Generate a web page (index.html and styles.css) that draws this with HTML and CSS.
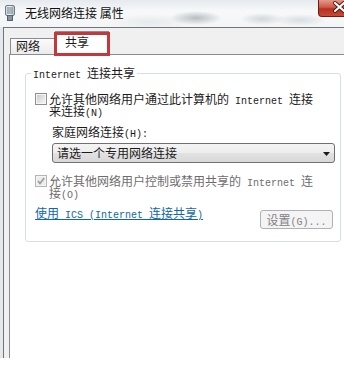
FILE: index.html
```html
<!DOCTYPE html>
<html lang="zh-CN">
<head>
<meta charset="utf-8">
<title>无线网络连接 属性</title>
<link rel="stylesheet" href="styles.css">
</head>
<body>
<div class="window">
  <div class="titlebar">
    <svg class="app-icon" width="10" height="16" viewBox="0 0 10 16">
      <defs>
        <linearGradient id="ig" x1="0" y1="0" x2="1" y2="0">
          <stop offset="0" stop-color="#c9d3dc"/>
          <stop offset="0.5" stop-color="#f4f7f9"/>
          <stop offset="1" stop-color="#aeb9c3"/>
        </linearGradient>
      </defs>
      <rect x="0.5" y="0.5" width="9" height="10" rx="1.5" fill="url(#ig)" stroke="#6f7d8a"/>
      <line x1="3" y1="2" x2="3" y2="9" stroke="#6f7d8a"/>
      <line x1="5" y1="2" x2="5" y2="9" stroke="#6f7d8a"/>
      <line x1="7" y1="2" x2="7" y2="9" stroke="#6f7d8a"/>
      <rect x="2.5" y="10.5" width="5" height="5" fill="#8793a0" stroke="#56626e"/>
    </svg>
    <span class="title">无线网络连接 属性</span>
    <div class="close">
      <svg class="close-x" width="43" height="17" viewBox="0 0 43 17">
        <path d="M17 4 L26 12 M26 4 L17 12" stroke="#4a140e" stroke-width="4" stroke-linecap="round"/>
        <path d="M17 4 L26 12 M26 4 L17 12" stroke="#ffffff" stroke-width="2.2" stroke-linecap="round"/>
      </svg>
    </div>
  </div>
  <div class="client">
    <div class="tabs">
      <div class="tab">网络</div>
      <div class="tab active">共享</div>
      <div class="mark"></div>
    </div>
    <div class="panel">
      <fieldset class="group">
        <legend class="legend"><span class="l">Internet </span>连接共享</legend>
        <div class="group-body">
          <div class="check-row">
            <span class="cb"></span>
            <span class="ctext"><span>允许其他网络用户通过此计算机的</span><span class="l"> Internet </span><span>连接</span><span>来连接</span><span class="l">(N)</span></span>
          </div>
          <div class="sub-label">家庭网络连接<span class="l">(H):</span></div>
          <div class="select">
            <span>请选一个专用网络连接</span>
            <svg class="arrow" width="7" height="4" viewBox="0 0 7 4"><path d="M0 0 H7 L3.5 4 Z" fill="#1a1a1a"/></svg>
          </div>
          <div class="check-row disabled">
            <svg class="cb-svg" width="12" height="12" viewBox="0 0 12 12">
              <rect x="0.5" y="0.5" width="11" height="11" fill="#f4f4f4" stroke="#b5b5b5"/>
              <rect x="2" y="2" width="8" height="8" fill="#ececec"/>
              <path d="M3 6 L5 8.5 L9.2 3" fill="none" stroke="#9a9a9a" stroke-width="1.6"/>
            </svg>
            <span class="ctext"><span>允许其他网络用户控制或禁用共享的</span><span class="l"> Internet </span><span>连</span><span>接</span><span class="l">(O)</span></span>
          </div>
          <div class="link-row">
            <a class="link" href="#">使用<span class="l"> ICS  (Internet </span>连接共享<span class="l">)</span></a>
            <button class="btn" type="button" disabled>设置<span class="l">(G)...</span></button>
          </div>
        </div>
      </fieldset>
    </div>
  </div>
</div>
</body>
</html>
```
FILE: styles.css
```css
* { box-sizing: border-box; }

body {
  margin: 0;
  background: #ffffff;
  font-family: "Noto Sans CJK SC", sans-serif;
  font-size: 12px;
  color: #1b1b1b;
}

.l {
  font-family: "Liberation Mono", "Noto Sans CJK SC", monospace;
  font-size: 10px;
  line-height: 0;
}

.window {
  width: 344px;
  height: 358px;
  overflow: hidden;
  display: flex;
  flex-direction: column;
  background: #e4e8eb;
}

.titlebar {
  height: 27px;
  flex: none;
  display: flex;
  align-items: flex-start;
  background:
    radial-gradient(ellipse 26px 7px at 196px 18px, rgba(110,118,128,0.45), rgba(110,118,128,0)),
    radial-gradient(ellipse 22px 6px at 262px 19px, rgba(140,148,158,0.32), rgba(140,148,158,0)),
    radial-gradient(ellipse 26px 6px at 300px 20px, rgba(150,158,168,0.28), rgba(150,158,168,0)),
    radial-gradient(ellipse 40px 8px at 150px 22px, rgba(170,176,184,0.18), rgba(170,176,184,0)),
    linear-gradient(#e6eaee, #f6f8f9 40%, #f3f5f6);
}

.app-icon {
  margin: 5px 0 0 5px;
  flex: none;
}

.title {
  margin: 6px 0 0 10px;
  line-height: 14px;
  font-size: 12px;
  color: #111111;
}

.close {
  margin-left: auto;
  margin-right: -17px;
  width: 43px;
  height: 17px;
  flex: none;
  border: 1px solid #6b1d14;
  border-top: none;
  border-radius: 0 0 4px 4px;
  background: linear-gradient(#e3998b, #cf5a47 45%, #b9301f 55%, #c74a36);
}

.close-x {
  display: block;
  margin: -1px 0 0 -1px;
}

.client {
  flex: 1;
  margin-left: 3px;
  border-left: 1px solid #70757a;
  border-top: 1px solid #70757a;
  background: #f0f0f0;
  padding-left: 5px;
  display: flex;
  flex-direction: column;
}

.tabs {
  height: 26px;
  flex: none;
  display: flex;
  align-items: flex-end;
  position: relative;
}

.tab {
  height: 16px;
  width: 45px;
  margin-left: 1px;
  padding-left: 5px;
  border: 1px solid #898c95;
  border-bottom: none;
  background: linear-gradient(#fbfbfb, #ebebeb);
  line-height: 14px;
  color: #1b1b1b;
}

.tab.active {
  height: 23px;
  width: 54px;
  margin-left: 0;
  padding-left: 9px;
  background: #ffffff;
  line-height: 20px;
}

.mark {
  position: absolute;
  left: 45px;
  top: 4px;
  width: 56px;
  height: 24px;
  border: 3px solid #c2383b;
}

.panel {
  flex: 1;
  background: #ffffff;
  border-left: 1px solid #898c95;
  border-top: 1px solid #898c95;
}

.group {
  margin: 12px 0 0 15px;
  width: 316px;
  padding: 0;
  border: 1px solid #d5dfe5;
  border-radius: 3px;
  min-width: 0;
}

.legend {
  margin-left: 5px;
  padding: 0 2px;
  line-height: 12px;
  color: #1b1b1b;
}

.group-body {
  padding: 14px 5px 12px 9px;
}

.check-row {
  display: flex;
  align-items: flex-start;
  gap: 2px;
}

.cb {
  width: 12px;
  height: 12px;
  flex: none;
  border: 1px solid #8e8f8f;
  box-shadow: inset 0 0 0 1px #f6f6f6;
  background: linear-gradient(135deg, #c3c6ca, #eeeeee 75%, #f7f7f7);
}

.cb-svg {
  flex: none;
  display: block;
}

.ctext {
  width: 270px;
  line-height: 12px;
}

.disabled .ctext {
  color: #6d6d6d;
}

.sub-label {
  margin: 9px 0 0 17px;
  line-height: 12px;
}

.select {
  margin: 5px 0 0 17px;
  width: 283px;
  height: 20px;
  border: 1px solid #707070;
  border-radius: 3px;
  background: linear-gradient(#f4f4f4, #ededed 50%, #e2e2e2 50%, #d8d8d8);
  display: flex;
  align-items: center;
  justify-content: space-between;
  padding: 0 4px 0 4px;
  line-height: 12px;
}

.arrow {
  display: block;
  margin-top: 1px;
}

.check-row.disabled {
  margin-top: 12px;
}

.link-row {
  margin-top: 8px;
  display: flex;
  justify-content: space-between;
  align-items: flex-start;
}

.link {
  line-height: 12px;
  color: #0f67a8;
  text-decoration: underline;
}

.btn {
  margin: 3px 2px 0 0;
  width: 73px;
  height: 19px;
  padding: 0;
  border: 1px solid #adb2b5;
  border-radius: 3px;
  background: #f4f4f4;
  color: #838383;
  font-family: "Noto Sans CJK SC", sans-serif;
  font-size: 12px;
  line-height: 17px;
}
```
